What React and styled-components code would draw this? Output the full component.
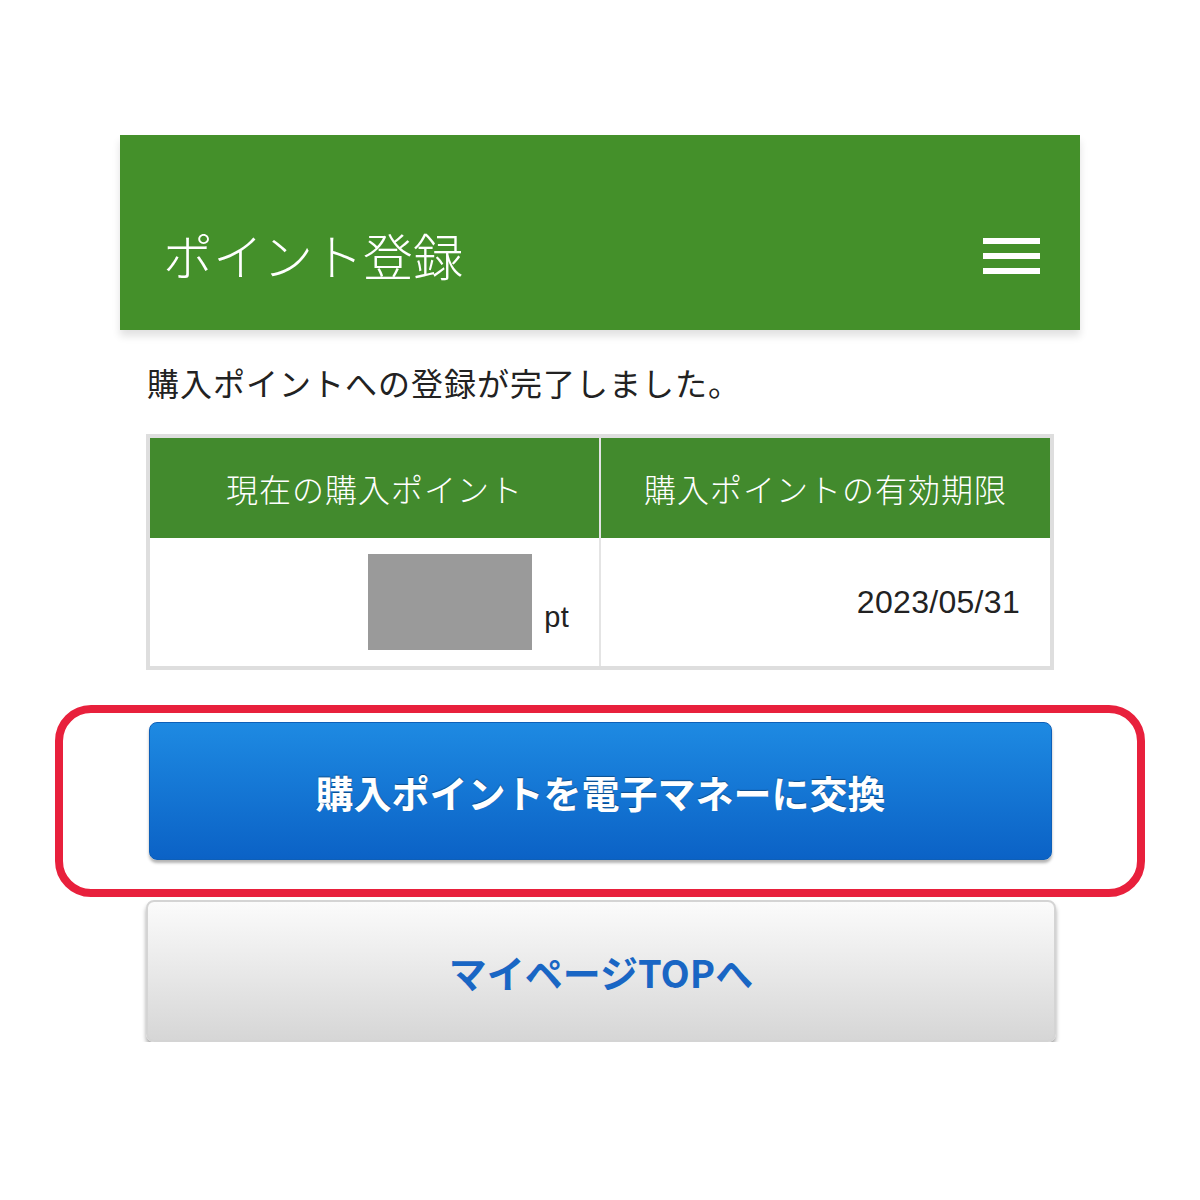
import styled, { createGlobalStyle } from "styled-components";

const GlobalStyle = createGlobalStyle`
  body {
    margin: 0;
    background: #fff;
    font-family: "Noto Sans CJK JP", "Noto Sans", sans-serif;
  }
`;

const Page = styled.div`
  width: 960px;
  margin: 0 auto;
  padding-top: 135px;
`;

const Header = styled.header`
  height: 195px;
  box-sizing: border-box;
  padding: 46px 40px 0 43px;
  background: #44902a;
  display: flex;
  align-items: center;
  justify-content: space-between;
  box-shadow: 0 6px 8px rgba(0, 0, 0, 0.12);
`;

const Title = styled.h1`
  margin: -4px 0 0;
  color: #fff;
  font-size: 50px;
  font-weight: 300;
  line-height: 1;
`;

const Burger = styled.div`
  width: 57px;
  display: flex;
  flex-direction: column;
  gap: 9px;
  span {
    display: block;
    height: 6px;
    background: #fff;
  }
`;

const Content = styled.main`
  padding: 30px 26px 0;
  display: flex;
  flex-direction: column;
`;

const Message = styled.p`
  margin: 0 0 30px 1px;
  font-size: 32px;
  line-height: 44px;
  letter-spacing: 1px;
  color: #222;
  font-weight: 400;
`;

const Table = styled.table`
  width: 100%;
  border-collapse: collapse;
  border: 4px solid #dedede;
  table-layout: fixed;
`;

const Th = styled.th`
  height: 100px;
  background: #428a2d;
  color: #fff;
  font-size: 32px;
  font-weight: 300;
  letter-spacing: 1px;
  text-align: center;
  padding: 0;
  border-left: 2px solid #e4e4e4;
  &:first-child {
    border-left: none;
  }
`;

const Td = styled.td`
  height: 128px;
  padding: 0 30px 0 0;
  border-left: 2px solid #e4e4e4;
  text-align: right;
  font-family: "Liberation Sans", Arial, sans-serif;
  font-size: 32px;
  letter-spacing: 0.3px;
  color: #222;
  &:first-child {
    border-left: none;
    padding-right: 27px;
  }
`;

const Points = styled.div`
  display: flex;
  justify-content: flex-end;
  align-items: flex-end;
  gap: 12px;
  margin-right: 3px;
`;

const Masked = styled.div`
  width: 164px;
  height: 96px;
  background: #9a9a9a;
`;

const Unit = styled.span`
  font-size: 29px;
  line-height: 1;
  padding-bottom: 18px;
`;

const Highlight = styled.div`
  margin: 35px -91px 3px;
  border: 8px solid #e8203c;
  border-radius: 36px;
  padding: 9px 85px 29px 86px;
`;

const Button = styled.button`
  display: block;
  width: 100%;
  box-sizing: border-box;
  border-radius: 8px;
  font-family: "Noto Sans CJK JP", sans-serif;
  font-weight: 700;
  font-size: 38px;
  cursor: pointer;
  text-align: center;
  background: ${(p) =>
    p.$primary
      ? "linear-gradient(#1e8ae2, #0b62c6)"
      : "linear-gradient(#fbfbfb, #d6d6d6)"};
  color: ${(p) => (p.$primary ? "#fff" : "#1966c4")};
  border: ${(p) => (p.$primary ? "1px solid #0d5fb8" : "2px solid #d4d4d4")};
  height: ${(p) => (p.$primary ? "138px" : "142px")};
  box-shadow: 0 3px 3px rgba(0, 0, 0, 0.3);
  text-shadow: ${(p) => (p.$primary ? "0 -1px 1px rgba(0,0,0,0.35)" : "none")};
`;

const Secondary = styled(Button)`
  width: calc(100% + 2px);
  box-shadow: 0 4px 4px rgba(0, 0, 0, 0.35);
`;

export default function App() {
  return (
    <>
      <GlobalStyle />
      <Page>
        <Header>
          <Title>ポイント登録</Title>
          <Burger>
            <span />
            <span />
            <span />
          </Burger>
        </Header>
        <Content>
          <Message>購入ポイントへの登録が完了しました。</Message>
          <Table>
            <thead>
              <tr>
                <Th>現在の購入ポイント</Th>
                <Th>購入ポイントの有効期限</Th>
              </tr>
            </thead>
            <tbody>
              <tr>
                <Td>
                  <Points>
                    <Masked />
                    <Unit>pt</Unit>
                  </Points>
                </Td>
                <Td>2023/05/31</Td>
              </tr>
            </tbody>
          </Table>
          <Highlight>
            <Button $primary>購入ポイントを電子マネーに交換</Button>
          </Highlight>
          <Secondary>マイページTOPへ</Secondary>
        </Content>
      </Page>
    </>
  );
}
